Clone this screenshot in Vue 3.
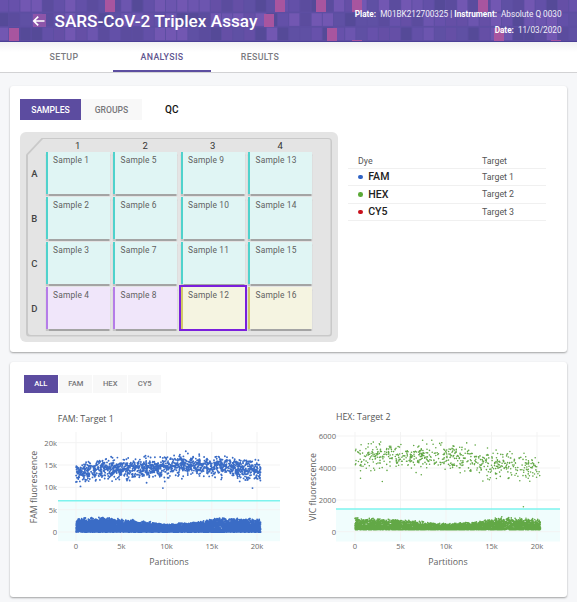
<script setup>
import { computed } from 'vue'

// small seeded generator so the scatter and the header tiles stay the same on each load
const makeRandom = (seed) => {
  let s = seed
  return () => {
    s = (s * 1664525 + 1013904223) % 4294967296
    return s / 4294967296
  }
}

const gauss = (rnd) => (rnd() + rnd() + rnd() + rnd() - 2) / 0.58

const lerpCurve = (curve, x) => {
  for (let i = 1; i < curve.length; i++) {
    if (x <= curve[i][0]) {
      const [x0, y0] = curve[i - 1]
      const [x1, y1] = curve[i]
      return y0 + ((y1 - y0) * (x - x0)) / (x1 - x0)
    }
  }
  return curve[curve.length - 1][1]
}

const tileColors = ['#5f50a4', '#6350a8', '#6751ab', '#6c55af', '#7257b2', '#5b4c9e', '#554a98', '#654fa6']
const tileRand = makeRandom(77)
const headerTiles = []
for (let row = 0; row < 4; row++) {
  for (let col = 0; col < 52; col++) {
    headerTiles.push({
      id: `${row}-${col}`,
      x: -2 + col * 11.2,
      y: -1 + row * 14.3,
      fill: tileColors[Math.floor(tileRand() * tileColors.length)]
    })
  }
}
const pinkTiles = [
  [9, 28], [105, -1], [264, 14], [275, -1], [316, -1], [327, 28], [352, -1], [478, -1], [494, 28]
]

const wells = [
  ['A', ['Sample 1', 'Sample 5', 'Sample 9', 'Sample 13'], ['teal', 'teal', 'teal', 'teal']],
  ['B', ['Sample 2', 'Sample 6', 'Sample 10', 'Sample 14'], ['teal', 'teal', 'teal', 'teal']],
  ['C', ['Sample 3', 'Sample 7', 'Sample 11', 'Sample 15'], ['teal', 'teal', 'teal', 'teal']],
  ['D', ['Sample 4', 'Sample 8', 'Sample 12', 'Sample 16'], ['purple', 'purple', 'olive', 'olive']]
]

const dyes = [
  { name: 'FAM', target: 'Target 1', color: '#2f62c4' },
  { name: 'HEX', target: 'Target 2', color: '#5aa936' },
  { name: 'CY5', target: 'Target 3', color: '#c8101c' }
]

const scatter = (opts) => {
  const rnd = makeRandom(opts.seed)
  const px = (v) => opts.x0 + v * opts.xScale
  const py = (v) => opts.y0 - v * opts.yScale
  let d = ''
  const dot = (x, y) => {
    d += `M${px(x).toFixed(1)} ${py(y).toFixed(1)}h0`
  }
  for (let i = 0; i < opts.upperCount; i++) {
    const x = rnd() * 20400
    dot(x, lerpCurve(opts.upper, x) + gauss(rnd) * opts.upperSpread)
  }
  for (let i = 0; i < opts.lowerCount; i++) {
    const x = rnd() * 20400
    const top = lerpCurve(opts.lower, x)
    dot(x, opts.lowerMin + Math.pow(rnd(), 1.4) * (top - opts.lowerMin) * (0.8 + rnd() * 0.45))
  }
  opts.outliers.forEach(([x, y]) => dot(x, y))
  return d
}

const famDots = computed(() => scatter({
  seed: 11,
  x0: 76,
  y0: 532,
  xScale: 181 / 20000,
  yScale: 89.5 / 20000,
  upperCount: 1500,
  upper: [[0, 13300], [3000, 14100], [8000, 14300], [12000, 14900], [16000, 14600], [20400, 13500]],
  upperSpread: 1050,
  lowerCount: 7000,
  lowerMin: 0,
  lower: [[0, 2500], [3000, 2800], [6000, 2300], [10000, 1500], [13000, 1800], [16000, 2700], [20400, 2300]],
  outliers: [[9600, 9800], [19500, 9800], [7800, 11000], [500, 10200]]
}))

const hexDots = computed(() => scatter({
  seed: 29,
  x0: 355,
  y0: 531.7,
  xScale: 182 / 20000,
  yScale: 95.7 / 6000,
  upperCount: 620,
  upper: [[0, 4700], [7000, 4750], [11000, 4650], [15000, 4250], [20400, 3950]],
  upperSpread: 410,
  lowerCount: 5000,
  lowerMin: 120,
  lower: [[0, 740], [5000, 660], [10000, 440], [13000, 520], [16000, 780], [20400, 680]],
  outliers: [[600, 3350], [3000, 3150], [18500, 1560]]
}))

const famYTicks = [[442.7, '20k'], [465, '15k'], [487.3, '10k'], [509.7, '5k'], [532, '0']]
const famXTicks = [[76, '0'], [121.3, '5k'], [166.5, '10k'], [211.8, '15k'], [257, '20k']]
const hexYTicks = [[436, '6000'], [468, '4000'], [500, '2000'], [531.7, '0']]
const hexXTicks = [[355, '0'], [400.5, '5k'], [446, '10k'], [491.5, '15k'], [537, '20k']]
</script>

<template>
  <div class="page">
    <header class="app-header">
      <svg class="header-tiles" width="577" height="42" aria-hidden="true">
        <rect v-for="t in headerTiles" :key="t.id" :x="t.x" :y="t.y" width="10.2" height="12.6" :fill="t.fill" />
        <rect x="33" y="14" width="13" height="13" fill="#8d55a9" />
        <rect v-for="p in pinkTiles" :key="p[0]" :x="p[0]" :y="p[1]" width="10" height="13" fill="#a8559f" />
        <rect x="352" y="40" width="10" height="2" fill="#a8559f" />
        <rect x="551" y="40" width="10" height="2" fill="#a8559f" />
      </svg>
      <svg class="back-arrow" width="14" height="12" viewBox="0 0 14 12">
        <path d="M12.5 6H2M6.2 1.6 1.8 6l4.4 4.4" fill="none" stroke="#fff" stroke-width="1.7" />
      </svg>
      <h1 class="title">SARS-CoV-2 Triplex Assay</h1>
      <div class="meta">
        <div><b>Plate:</b>&nbsp; M01BK212700325 | <b>Instrument:</b>&nbsp; Absolute Q 0030</div>
        <div><b>Date:</b>&nbsp; 11/03/2020</div>
      </div>
    </header>

    <nav class="tabs">
      <span class="tab">SETUP</span>
      <span class="tab active">ANALYSIS</span>
      <span class="tab">RESULTS</span>
    </nav>

    <main class="content">
      <section class="card plate-card">
        <div class="view-switch">
          <button class="seg seg-on">SAMPLES</button>
          <button class="seg">GROUPS</button>
          <span class="qc">QC</span>
        </div>

        <div class="plate-row">
          <div class="plate">
            <div class="plate-edge">
              <div class="plate-inner">
                <div class="corner"></div>
                <div v-for="n in 4" :key="n" class="col-label">{{ n }}</div>
                <template v-for="row in wells" :key="row[0]">
                  <div class="row-label">{{ row[0] }}</div>
                  <div
                    v-for="(name, i) in row[1]"
                    :key="name"
                    class="well"
                    :class="[row[2][i], { selected: name === 'Sample 12' }]"
                  >
                    {{ name }}
                  </div>
                </template>
              </div>
            </div>
          </div>

          <table class="dye-table">
            <thead>
              <tr><th>Dye</th><th>Target</th></tr>
            </thead>
            <tbody>
              <tr v-for="dye in dyes" :key="dye.name">
                <td class="dye-cell">
                  <i class="dot" :style="{ background: dye.color }"></i>{{ dye.name }}
                </td>
                <td>{{ dye.target }}</td>
              </tr>
            </tbody>
          </table>
        </div>
      </section>

      <section class="card chart-card">
        <div class="chart-switch">
          <button class="chip chip-on">ALL</button>
          <button class="chip">FAM</button>
          <button class="chip">HEX</button>
          <button class="chip">CY5</button>
        </div>

        <div class="charts">
          <!-- viewBox uses page coordinates, easier to read off the axes -->
          <svg class="chart" width="279" height="190" viewBox="10 400 279 190">
            <text x="57.7" y="422" class="plot-title">FAM: Target 1</text>
            <rect x="58" y="500.7" width="222" height="40.5" fill="#f0fdfd" />
            <line v-for="t in famYTicks" :key="t[1]" x1="58" x2="280" :y1="t[0]" :y2="t[0]" class="grid-line" />
            <line v-for="t in famXTicks" :key="t[1]" :x1="t[0]" :x2="t[0]" y1="432" y2="541" class="grid-line" />
            <path :d="famDots" stroke="#3a6cc6" stroke-width="1.9" stroke-linecap="round" fill="none" />
            <line x1="58" x2="280" y1="500.7" y2="500.7" stroke="#7df3ee" stroke-width="1.4" />
            <text v-for="t in famYTicks" :key="t[1]" x="57" :y="t[0] + 3" class="tick" text-anchor="end">{{ t[1] }}</text>
            <text v-for="t in famXTicks" :key="t[1]" :x="t[0]" y="549" class="tick" text-anchor="middle">{{ t[1] }}</text>
            <text x="169" y="565" class="axis-title" text-anchor="middle">Partitions</text>
            <text class="axis-title" text-anchor="middle" transform="translate(37 487) rotate(-90)">FAM fluorescence</text>
          </svg>

          <svg class="chart" width="278" height="190" viewBox="289 400 278 190">
            <text x="336" y="420" class="plot-title">HEX: Target 2</text>
            <rect x="336" y="509" width="224" height="32.5" fill="#f0fdfd" />
            <line v-for="t in hexYTicks" :key="t[1]" x1="336" x2="560" :y1="t[0]" :y2="t[0]" class="grid-line" />
            <line v-for="t in hexXTicks" :key="t[1]" :x1="t[0]" :x2="t[0]" y1="432" y2="541" class="grid-line" />
            <path :d="hexDots" stroke="#62a846" stroke-width="1.6" stroke-linecap="round" fill="none" />
            <line x1="336" x2="560" y1="509" y2="509" stroke="#7df3ee" stroke-width="1.4" />
            <text v-for="t in hexYTicks" :key="t[1]" x="336" :y="t[0] + 3" class="tick" text-anchor="end">{{ t[1] }}</text>
            <text v-for="t in hexXTicks" :key="t[1]" :x="t[0]" y="549" class="tick" text-anchor="middle">{{ t[1] }}</text>
            <text x="448" y="565" class="axis-title" text-anchor="middle">Partitions</text>
            <text class="axis-title" text-anchor="middle" transform="translate(316 487) rotate(-90)">VIC fluorescence</text>
          </svg>
        </div>
      </section>
    </main>
  </div>
</template>

<style scoped>
.page {
  width: 577px;
  height: 602px;
  overflow: hidden;
  background: #f6f7f9;
  font-family: Roboto, "Liberation Sans", sans-serif;
}

.app-header {
  position: relative;
  height: 42px;
  box-sizing: border-box;
  display: flex;
  align-items: center;
  background: #5d4ea2;
  border-bottom: 1.5px solid #4b3f96;
  overflow: hidden;
}

.header-tiles {
  position: absolute;
  left: 0;
  top: 0;
}

.back-arrow {
  position: relative;
  margin-left: 32px;
  margin-top: 1px;
}

.title {
  position: relative;
  margin: 1px 0 0 8.5px;
  color: #fff;
  font-size: 17.2px;
  font-weight: 500;
  white-space: nowrap;
}

.meta {
  position: relative;
  margin-left: auto;
  margin-right: 15.5px;
  margin-top: 2px;
  color: #f1eef9;
  font-size: 8.2px;
  line-height: 16px;
  text-align: right;
  white-space: nowrap;
}

.meta b {
  font-weight: 700;
  color: #fff;
}

.tabs {
  height: 31px;
  box-sizing: border-box;
  display: flex;
  padding-left: 15px;
  background: linear-gradient(#f1f1f3, #fff 10px);
  border-bottom: 1px solid #d2d2d4;
}

.tab {
  width: 98px;
  box-sizing: border-box;
  text-align: center;
  line-height: 30px;
  color: #7b7b7f;
  font-size: 8.8px;
  font-weight: 500;
  letter-spacing: 0.35px;
}

.tab.active {
  color: #5f5690;
  height: 30px;
  border-bottom: 2px solid #5c4ea0;
}

.content {
  padding: 13px 10px 0;
  display: flex;
  flex-direction: column;
  gap: 10px;
}

.card {
  width: 557px;
  box-sizing: border-box;
  background: #fff;
  border-radius: 3px;
  box-shadow: 0 1px 2px rgba(0, 0, 0, 0.35);
}

.plate-card {
  height: 266px;
  padding: 13px 10px 0;
}

.view-switch {
  display: flex;
  align-items: center;
  height: 21px;
}

.seg {
  height: 21px;
  width: 61px;
  border: none;
  padding: 0;
  background: #f8f8f8;
  color: #77777a;
  font-family: inherit;
  font-size: 8.6px;
  font-weight: 500;
}

.seg-on {
  background: #5c4ca0;
  color: #fff;
}

.qc {
  margin-left: 23px;
  font-size: 10px;
  font-weight: 500;
  color: #111;
}

.plate-row {
  display: flex;
  align-items: flex-start;
  margin-top: 12px;
}

.plate {
  width: 318px;
  height: 210px;
  box-sizing: border-box;
  padding: 5.5px 6px 5.5px;
  background: #e4e4e4;
  border-radius: 6px;
}

.plate-edge {
  height: 199px;
  padding: 1.5px;
  box-sizing: border-box;
  background: #c9c9c9;
  border-radius: 4px;
  clip-path: polygon(16px 0, 100% 0, 100% 100%, 0 100%, 0 17px);
}

.plate-inner {
  height: 196px;
  background: #e4e4e4;
  border-radius: 3px;
  clip-path: polygon(15.5px 0, 100% 0, 100% 100%, 0 100%, 0 16.5px);
  display: grid;
  grid-template-columns: 14.6px repeat(4, 64px);
  grid-template-rows: 10.2px repeat(4, 42px);
  column-gap: 3.5px;
  row-gap: 3px;
  align-content: start;
}

.col-label {
  font-size: 9.5px;
  color: #333;
  text-align: center;
  line-height: 13px;
}

.row-label {
  align-self: center;
  text-align: center;
  padding-right: 1px;
  font-size: 9.5px;
  font-weight: 500;
  color: #444;
}

.well {
  box-sizing: border-box;
  padding: 3px 0 0 5.5px;
  font-size: 8.4px;
  line-height: 10px;
  letter-spacing: 0.15px;
  color: #5f5f5f;
  border-left: 2px solid;
  box-shadow: 0 1.5px 1px rgba(0, 0, 0, 0.28);
  position: relative;
}

.teal {
  background: #e0f5f4;
  border-left-color: #4fd2cc;
}

.purple {
  background: #f0e6fa;
  border-left-color: #b57de8;
}

.olive {
  background: #f5f4e1;
  border-left-color: #d2ca68;
}

.selected {
  outline: 2px solid #7a1fdc;
  box-shadow: none;
}

.dye-table {
  width: 198px;
  margin: 22px 0 0 10px;
  border-collapse: collapse;
  font-size: 8.8px;
  color: #555;
}

.dye-table th {
  height: 13.5px;
  padding: 0 0 0 10px;
  text-align: left;
  font-weight: 400;
  border-bottom: 1px solid #f0f0f0;
}

.dye-table th:last-child,
.dye-table td:last-child {
  width: 64px;
  padding-left: 0;
}

.dye-table td {
  height: 17.5px;
  padding: 0;
  box-sizing: border-box;
  border-bottom: 1px solid #f0f0f0;
}

.dye-cell {
  padding-left: 10px !important;
  color: #222;
  font-size: 10.6px;
  font-weight: 500;
}

.dot {
  display: inline-block;
  width: 4.6px;
  height: 4.6px;
  margin-right: 5.6px;
  border-radius: 50%;
  vertical-align: 1px;
}

.chart-card {
  height: 235px;
  padding: 12.7px 0 0 13.7px;
}

.chart-switch {
  display: flex;
  gap: 1px;
}

.chip {
  width: 33.5px;
  height: 18.4px;
  border: none;
  padding: 0;
  background: #f8f8f8;
  color: #77777a;
  font-family: inherit;
  font-size: 7.6px;
  font-weight: 500;
}

.chip-on {
  width: 34.3px;
  background: #5c4ca0;
  color: #fff;
}

.charts {
  display: flex;
  margin: 6.9px 0 0 -13.7px;
}

.chart {
  display: block;
  flex: none;
}

.plot-title {
  font-family: "Open Sans", sans-serif;
  font-size: 8.8px;
  fill: #555;
}

.tick {
  font-family: "Open Sans", sans-serif;
  font-size: 7.6px;
  fill: #6a6a6a;
}

.axis-title {
  font-family: "Open Sans", sans-serif;
  font-size: 8.8px;
  fill: #5f5f5f;
}

.grid-line {
  stroke: #f3f3f3;
  stroke-width: 1;
}
</style>

<style>
body {
  background: #f6f7f9;
}
</style>
